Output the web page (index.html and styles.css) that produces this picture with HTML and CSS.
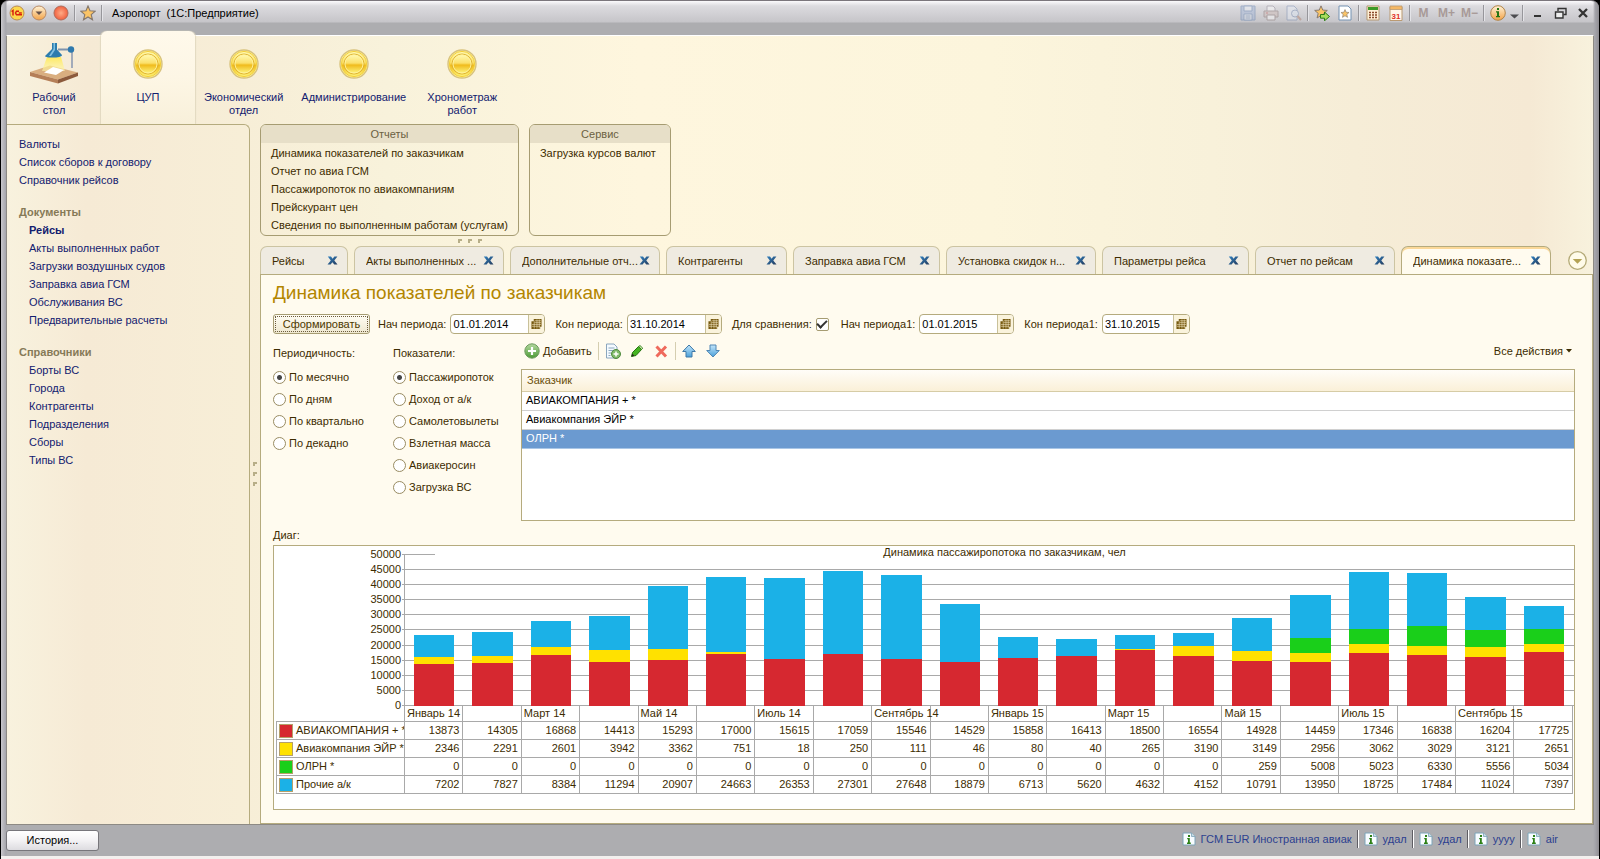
FILE: index.html
```html
<!DOCTYPE html>
<html lang="ru">
<head>
<meta charset="utf-8">
<title>Аэропорт (1С:Предприятие)</title>
<link rel="stylesheet" href="styles.css">
</head>
<body>
<svg class="defs" aria-hidden="true">
  <defs>
    <linearGradient id="gold" x1="0" y1="0" x2="0" y2="1"><stop offset="0" stop-color="#fff9b0"/><stop offset=".45" stop-color="#fbe06a"/><stop offset=".56" stop-color="#f0bb1c"/><stop offset="1" stop-color="#fdf37a"/></linearGradient>
    <linearGradient id="orange" x1="0" y1="0" x2="0" y2="1"><stop offset="0" stop-color="#fff3d8"/><stop offset="1" stop-color="#f3a348"/></linearGradient>
    <radialGradient id="red"><stop offset="0" stop-color="#ffab86"/><stop offset="1" stop-color="#f0603f"/></radialGradient>
    <linearGradient id="blue" x1="0" y1="0" x2="0" y2="1"><stop offset="0" stop-color="#c4e6fa"/><stop offset="1" stop-color="#4aa0da"/></linearGradient>
    <linearGradient id="green" x1="0" y1="0" x2="0" y2="1"><stop offset="0" stop-color="#b4d9a0"/><stop offset="1" stop-color="#4c9a35"/></linearGradient>
    <linearGradient id="beam" x1="0" y1="0" x2="0" y2="1"><stop offset="0" stop-color="#ffe94a"/><stop offset="1" stop-color="#fff6ae" stop-opacity=".7"/></linearGradient>
    <linearGradient id="cross" x1="0" y1="0" x2="1" y2="1"><stop offset="0" stop-color="#2f80c0"/><stop offset="1" stop-color="#263c5c"/></linearGradient>
  </defs>
  <symbol id="coin" viewBox="0 0 30 30"><circle cx="15" cy="15" r="14" fill="#fff5a0" stroke="#d8c27c" stroke-width="1.400"/><circle cx="15" cy="15" r="12.600" fill="url(#gold)" stroke="#f3cf3c"/><circle cx="15" cy="15" r="10" fill="none" stroke="#dcb02e" stroke-width=".9"/><circle cx="15" cy="15" r="9" fill="url(#gold)" stroke="#fff3a0" stroke-width=".9"/></symbol>
  <symbol id="x" viewBox="0 0 11 11"><path d="M.8 1.500H4L5.600 3.700 7.400 1.500h3L7.300 5.500l3.200 4H7.300L5.400 7.300 3.600 9.500H.5L3.800 5.500Z" fill="url(#cross)"/></symbol>
  <symbol id="cal" viewBox="0 0 12 12"><path d="M3 .5h8.500v8.500H10v2.500H.5V3H3Z" fill="#76590f"/><path d="M4 2.500h7M4 4.500h7M1 6.500h10M1 8.500h9M6.500 1v10M9 1v10M3.500 3v8" stroke="#fbf1cf" stroke-width=".6"/></symbol>
  <symbol id="info" viewBox="0 0 14 14"><path d="M1 1h8.500L13 4.500V13H1Z" fill="#f7fcff" stroke="#7da4b8"/><path d="M9.500 1v3.500H13" fill="#c6dbe6" stroke="#7da4b8" stroke-width=".8"/><path d="M5.200 6h2.600v4.500h1V12H5v-1.500h1V7.300h-.8ZM6 3h2v2H6Z" fill="#2c8015"/></symbol>
  <symbol id="star" viewBox="0 0 16 16"><path d="m8 1 2 4.800 5.200.4-4 3.400 1.300 5.200L8 12l-4.500 2.800 1.300-5.200-4-3.400L6 5.800Z" fill="#fbc466" stroke="#84776c" stroke-width="1.100"/></symbol>
</svg>

<div class="window">
  <header class="titlebar">
    <button class="ico" aria-label="Главное меню"><svg viewBox="0 0 16 16"><circle cx="8" cy="8" r="7" fill="#fcd84c" stroke="#b98a55"/><path d="M2.500 6.500 4 5.500v5M10 6.200H7.500L6.500 8l1 1.800H13M9.800 8h3" fill="none" stroke="#d8200f" stroke-width="1.500"/></svg></button>
    <button class="ico" aria-label="Меню"><svg viewBox="0 0 16 16"><circle cx="8" cy="8" r="7" fill="url(#orange)" stroke="#b98a66"/><path d="M4.500 6.500h7L8 10Z" fill="#665149"/></svg></button>
    <button class="ico" aria-label="Закрыть окно"><svg viewBox="0 0 16 16"><circle cx="8" cy="8" r="7" fill="url(#red)" stroke="#b06d5c"/></svg></button>
    <span class="vsep"></span>
    <button class="ico" aria-label="Избранное"><svg><use href="#star"/></svg></button>
    <span class="vsep"></span>
    <h1 class="titlebar__title">Аэропорт&nbsp; (1С:Предприятие)</h1>
    <div class="tools">
      <button class="ico ico--off" aria-label="Сохранить"><svg viewBox="0 0 16 16"><path d="M1 1h14v14H1Z" fill="#9fb3d6" stroke="#5f7fae"/><path d="M4 1h8v5H4ZM4 9h8v6H4Z" fill="#eef2f8" stroke="#5f7fae"/><path d="M5.500 11h5M5.500 13h5" stroke="#5f7fae"/></svg></button>
      <button class="ico ico--off" aria-label="Печать"><svg viewBox="0 0 16 16"><path d="M4 6V1h6l2 2v3" fill="#fff" stroke="#8a8290"/><path d="M1 6h14v6H1Z" fill="#cdb9b4" stroke="#84706e"/><path d="M4 10h8v5H4Z" fill="#fff" stroke="#84706e"/><path d="M3 8h2" stroke="#b44"/></svg></button>
      <button class="ico ico--off" aria-label="Просмотр"><svg viewBox="0 0 16 16"><path d="M1 1h7l3 3v11H1Z" fill="#e8edf6" stroke="#7288b0"/><circle cx="9" cy="8.500" r="3.500" fill="#dfe9f6" stroke="#7288b0"/><path d="m11.500 11 3.500 4" stroke="#b07c66" stroke-width="2"/></svg></button>
      <span class="vsep"></span>
      <button class="ico" aria-label="Добавить в избранное"><svg viewBox="0 0 16 16"><use href="#star" x="0" y="0" width="14" height="14"/><path d="M6.500 9.500h4V7l5 4.500-5 4.300v-2.600h-4Z" fill="#a8dd5c" stroke="#2c7d18"/></svg></button>
      <button class="ico" aria-label="Список избранного"><svg viewBox="0 0 16 16"><path d="M2 1h9l3 3v11H2Z" fill="#fff" stroke="#7593b3"/><use href="#star" x="3.500" y="4" width="9" height="9"/></svg></button>
      <span class="vsep"></span>
      <button class="ico" aria-label="Калькулятор"><svg viewBox="0 0 16 16"><path d="M2 1h12v14H2Z" fill="#fff0d6" stroke="#b39772"/><path d="M3 2h10v3H3Z" fill="#3c9a26"/><path d="M4 7.500h2m1 0h2m1 0h2M4 10h2m1 0h2m1 0h2M4 12.500h2m1 0h2m1 0h2" stroke="#8a4a2c" stroke-width="1.500"/></svg></button>
      <button class="ico" aria-label="Календарь"><svg viewBox="0 0 16 16"><path d="M2 2h12v13.500H2Z" fill="#fff7ea" stroke="#ba9a72"/><path d="M2 1h12v3.500H2Z" fill="#f5b866" stroke="#ba9a72" stroke-width=".8"/><text x="8" y="13.500" text-anchor="middle" class="cal-day">31</text></svg></button>
      <span class="vsep"></span>
      <button class="mem">M</button><button class="mem">M+</button><button class="mem">M−</button>
      <span class="vsep"></span>
      <button class="ico" aria-label="Справка"><svg viewBox="0 0 16 16"><circle cx="8" cy="8" r="7.300" fill="url(#orange)" stroke="#b1854a"/><path d="M7 3h2v2H7ZM6 6.300h3V11h1v1.300H6V11h1V7.500H6Z" fill="#237613"/></svg></button>
      <button class="ico ico--narrow" aria-label="Ещё"><svg viewBox="0 0 9 16"><path d="M0 9.500h9L4.500 13.500Z" fill="#4c4c50"/></svg></button>
      <span class="vsep"></span>
      <button class="ico ico--win" aria-label="Свернуть"><svg viewBox="0 0 16 16"><path d="M5 11h7" stroke="#333" stroke-width="2"/></svg></button>
      <button class="ico ico--win" aria-label="Восстановить"><svg viewBox="0 0 16 16"><path d="M6 6V3.500h8v6h-2.500" fill="none" stroke="#333" stroke-width="1.400"/><path d="M3.500 7h7.500v6H3.500Z" fill="#eee" stroke="#333" stroke-width="1.400"/></svg></button>
      <button class="ico ico--win" aria-label="Закрыть"><svg viewBox="0 0 16 16"><path d="m4 4 8 8M12 4l-8 8" stroke="#333" stroke-width="2.300"/></svg></button>
    </div>
  </header>

  <div class="client">
    <nav class="sections" aria-label="Разделы">
      <a class="section" href="#"><svg class="section__lamp" viewBox="0 0 48 42"><path d="M0 30 20 23.500 48 30.500 28 37.500Z" fill="#d9ae80"/><path d="M0 30v4l28 7.500v-4Z" fill="#b57f58"/><path d="M28 37.500v4L48 34v-3.500Z" fill="#8c5a3c"/><path d="M17 15h14l4 14H12Z" fill="url(#beam)" opacity=".85"/><path d="m14 30.500 9-5.500 11 3-8 5Z" fill="#fff"/><path d="M42 9v17" stroke="#a3abba" stroke-width="2"/><path d="M28 7.500h11" stroke="#7d93ad" stroke-width="2"/><circle cx="41" cy="7.500" r="3.200" fill="#2f79ad"/><path d="M22 1h5v6.500l5 5.500c1 3-16 3.500-17 1l7-7Z" fill="#2b7cae"/><path d="M23.500 1H25v7l-4 6h-2l4.500-7Z" fill="#7fc0e2"/></svg><span>Рабочий<br>стол</span></a>
      <a class="section section--on" href="#"><svg class="section__coin"><use href="#coin"/></svg><span>ЦУП</span></a>
      <a class="section" href="#"><svg class="section__coin"><use href="#coin"/></svg><span>Экономический<br>отдел</span></a>
      <a class="section" href="#"><svg class="section__coin"><use href="#coin"/></svg><span>Администрирование</span></a>
      <a class="section" href="#"><svg class="section__coin"><use href="#coin"/></svg><span>Хронометраж<br>работ</span></a>
    </nav>

    <div class="body">
      <nav class="side" aria-label="Навигация">
        <ul class="side__list side__list--top">
          <li><a href="#">Валюты</a></li><li><a href="#">Список сборов к договору</a></li><li><a href="#">Справочник рейсов</a></li>
        </ul>
        <h2 class="side__head">Документы</h2>
        <ul class="side__list">
          <li><a href="#" class="side__current">Рейсы</a></li><li><a href="#">Акты выполненных работ</a></li><li><a href="#">Загрузки воздушных судов</a></li><li><a href="#">Заправка авиа ГСМ</a></li><li><a href="#">Обслуживания ВС</a></li><li><a href="#">Предварительные расчеты</a></li>
        </ul>
        <h2 class="side__head">Справочники</h2>
        <ul class="side__list">
          <li><a href="#">Борты ВС</a></li><li><a href="#">Города</a></li><li><a href="#">Контрагенты</a></li><li><a href="#">Подразделения</a></li><li><a href="#">Сборы</a></li><li><a href="#">Типы ВС</a></li>
        </ul>
      </nav>
      <div class="grip grip--v"><i></i><i></i><i></i></div>

      <main class="main">
        <div class="groups">
          <section class="group"><h2 class="group__head">Отчеты</h2>
            <ul class="group__list"><li><a href="#">Динамика показателей по заказчикам</a></li><li><a href="#">Отчет по авиа ГСМ</a></li><li><a href="#">Пассажиропоток по авиакомпаниям</a></li><li><a href="#">Прейскурант цен</a></li><li><a href="#">Сведения по выполненным работам (услугам)</a></li></ul>
          </section>
          <section class="group"><h2 class="group__head">Сервис</h2>
            <ul class="group__list"><li><a href="#">Загрузка курсов валют</a></li></ul>
          </section>
        </div>
        <div class="grip grip--h"><i></i><i></i><i></i></div>

        <div class="tabs">
          <div class="tab tab--xs"><button class="tab__label">Рейсы</button><button class="tab__x" aria-label="Закрыть"><svg><use href="#x"/></svg></button></div>
          <div class="tab tab--lg"><button class="tab__label">Акты выполненных ...</button><button class="tab__x" aria-label="Закрыть"><svg><use href="#x"/></svg></button></div>
          <div class="tab tab--lg"><button class="tab__label">Дополнительные отч...</button><button class="tab__x" aria-label="Закрыть"><svg><use href="#x"/></svg></button></div>
          <div class="tab tab--sm"><button class="tab__label">Контрагенты</button><button class="tab__x" aria-label="Закрыть"><svg><use href="#x"/></svg></button></div>
          <div class="tab tab--md"><button class="tab__label">Заправка авиа ГСМ</button><button class="tab__x" aria-label="Закрыть"><svg><use href="#x"/></svg></button></div>
          <div class="tab tab--lg"><button class="tab__label">Установка скидок н...</button><button class="tab__x" aria-label="Закрыть"><svg><use href="#x"/></svg></button></div>
          <div class="tab tab--md"><button class="tab__label">Параметры рейса</button><button class="tab__x" aria-label="Закрыть"><svg><use href="#x"/></svg></button></div>
          <div class="tab tab--ms"><button class="tab__label">Отчет по рейсам</button><button class="tab__x" aria-label="Закрыть"><svg><use href="#x"/></svg></button></div>
          <div class="tab tab--lg tab--on"><button class="tab__label">Динамика показате...</button><button class="tab__x" aria-label="Закрыть"><svg><use href="#x"/></svg></button></div>
          <button class="tabs__more" aria-label="Список вкладок"><svg viewBox="0 0 18 18"><circle cx="9" cy="9" r="8.300" fill="#fffbe9" stroke="#b3a976" stroke-width="1.200"/><path d="M4.500 7.500h9L9 12Z" fill="#b3a255"/></svg></button>
        </div>

        <div class="panel">
          <h2 class="panel__title">Динамика показателей по заказчикам</h2>
          <div class="params">
            <button class="run">Сформировать</button>
            <label for="d1">Нач периода:</label><span class="date"><input id="d1" type="text" value="01.01.2014"><button aria-label="Выбрать дату"><svg><use href="#cal"/></svg></button></span>
            <label for="d2">Кон периода:</label><span class="date"><input id="d2" type="text" value="31.10.2014"><button aria-label="Выбрать дату"><svg><use href="#cal"/></svg></button></span>
            <label for="cmp">Для сравнения:</label><input id="cmp" class="check" type="checkbox" checked>
            <label for="d3">Нач периода1:</label><span class="date"><input id="d3" type="text" value="01.01.2015"><button aria-label="Выбрать дату"><svg><use href="#cal"/></svg></button></span>
            <label for="d4">Кон периода1:</label><span class="date date--short"><input id="d4" type="text" value="31.10.2015"><button aria-label="Выбрать дату"><svg><use href="#cal"/></svg></button></span>
          </div>

          <div class="work">
            <div class="radios radios--period" role="radiogroup" aria-labelledby="gp">
              <div class="radios__head" id="gp">Периодичность:</div>
              <label><input type="radio" name="p" checked>По месячно</label><label><input type="radio" name="p">По дням</label><label><input type="radio" name="p">По квартально</label><label><input type="radio" name="p">По декадно</label>
            </div>
            <div class="radios radios--metric" role="radiogroup" aria-labelledby="gm">
              <div class="radios__head" id="gm">Показатели:</div>
              <label><input type="radio" name="m" checked>Пассажиропоток</label><label><input type="radio" name="m">Доход от а/к</label><label><input type="radio" name="m">Самолетовылеты</label><label><input type="radio" name="m">Взлетная масса</label><label><input type="radio" name="m">Авиакеросин</label><label><input type="radio" name="m">Загрузка ВС</label>
            </div>
            <div class="customers">
              <div class="bar">
                <button class="bar__add"><svg viewBox="0 0 16 16"><circle cx="8" cy="8" r="7.200" fill="url(#green)" stroke="#6d9a5e"/><path d="M8 4v8M4 8h8" stroke="#fff" stroke-width="2.200"/></svg>Добавить</button>
                <span class="bar__sep"></span>
                <button class="ico" aria-label="Скопировать"><svg viewBox="0 0 16 16"><path d="M1.500 1H9l3 3v11H1.500Z" fill="#f4faff" stroke="#8ba6bd"/><path d="M3.500 5h6M3.500 7.500h6M3.500 10h3M3.500 12.500h2" stroke="#8ba6bd"/><circle cx="11" cy="11" r="4.500" fill="#7fb96a" stroke="#4e8a3d"/><path d="M11 8.500v5M8.500 11h5" stroke="#fff" stroke-width="1.500"/></svg></button>
                <button class="ico" aria-label="Изменить"><svg viewBox="0 0 16 16"><path d="M2.500 13.500 3.500 9.500 9.500 3.500 12.500 6.500 7 12.500Z" fill="#45b320" stroke="#247411"/><path d="m9.500 3.500 1.500-1 2.800 2.700-1.300 1.300Z" fill="#c6e6a4" stroke="#247411" stroke-width=".8"/><path d="m2.500 13.500.8-3 2 2.200Z" fill="#2b2b1c"/></svg></button>
                <button class="ico" aria-label="Удалить"><svg viewBox="0 0 16 16"><path d="m3.500 3.500 9.500 10M13 3.500l-9.500 10" stroke="#ef6a5c" stroke-width="3"/></svg></button>
                <span class="bar__sep"></span>
                <button class="ico" aria-label="Вверх"><svg viewBox="0 0 16 16"><path d="M8 2 14.300 8.500H11V14H5V8.500H1.700Z" fill="url(#blue)" stroke="#3f79a8"/></svg></button>
                <button class="ico" aria-label="Вниз"><svg viewBox="0 0 16 16"><path d="M8 14 14.300 7.500H11V2H5v5.500H1.700Z" fill="url(#blue)" stroke="#5087b4"/></svg></button>
                <button class="bar__all">Все действия<svg viewBox="0 0 6 4"><path d="M0 0h6L3 3.500Z" fill="#3d2c00"/></svg></button>
              </div>
              <div class="list">
                <table class="list__table">
                  <thead><tr><th>Заказчик</th></tr></thead>
                  <tbody><tr><td>АВИАКОМПАНИЯ + *</td></tr><tr><td>Авиакомпания ЭЙР *</td></tr><tr class="is-on"><td>ОЛРН *</td></tr></tbody>
                </table>
              </div>
            </div>
          </div>

          <div class="diag">Диаг:</div>
          <div class="chart">
            <div class="plot">
              <ol class="plot__axis" id="axis"></ol>
              <div class="plot__area">
                <div class="plot__grid" id="grid"></div>
                <div class="plot__title">Динамика пассажиропотока по заказчикам, чел</div>
                <div class="plot__bars" id="bars"></div>
              </div>
            </div>
            <table class="data"><thead><tr id="months"><td class="data__corner"></td></tr></thead><tbody id="rows"></tbody></table>
          </div>
        </div>
      </main>
    </div>
  </div>

  <footer class="status">
    <button class="history">История...</button>
    <div class="links">
      <a href="#"><svg><use href="#info"/></svg>ГСМ EUR Иностранная авиак</a>
      <a href="#"><svg><use href="#info"/></svg>удал</a>
      <a href="#"><svg><use href="#info"/></svg>удал</a>
      <a href="#"><svg><use href="#info"/></svg>уууу</a>
      <a href="#"><svg><use href="#info"/></svg>air</a>
    </div>
  </footer>
</div>
<script src="chart.js"></script>
</body>
</html>
```
FILE: styles.css
```css
* { box-sizing: border-box; }
body { margin: 0; background: #000; font-family: "Liberation Sans", Arial, sans-serif; font-size: 11px; line-height: 18px; color: #3d2c00; }
button, input { font: inherit; color: inherit; margin: 0; }
button { border: 0; padding: 0; background: none; }
a { color: inherit; text-decoration: none; }
ul, ol { list-style: none; margin: 0; padding: 0; }
h1, h2 { margin: 0; font-size: inherit; font-weight: normal; }
svg { display: block; flex: none; }
.defs { position: absolute; width: 0; height: 0; }

.window { min-height: 100vh; margin: 0 1px; padding: 0 5px; display: flex; flex-direction: column; border-bottom: 3px solid #f3f0ee; border-top: 1px solid #7b767c; border-radius: 8px 8px 0 0; background: linear-gradient(to right, #c9c8cc, #a5a5ab 5px, transparent 6px, transparent calc(100% - 6px), #a5a5ab calc(100% - 4px), #8f8d92), linear-gradient(#fbfafc, #dcdbdf 5px, #c6c5c9 21px, #adadb0 22px, #adadb0 100%); }

.titlebar { height: 34px; padding: 3px 0 13px; display: flex; align-items: center; }
.ico { width: 23px; height: 18px; display: flex; align-items: center; justify-content: center; flex: none; }
.ico svg { width: 16px; height: 16px; }
.titlebar > .ico { width: 22px; }
.ico--off { opacity: .45; }
.titlebar .ico--narrow { width: 11px; }
.ico--narrow svg { width: 9px; }
.vsep { width: 1px; height: 16px; margin: 0 2px; background: #97969b; box-shadow: 1px 0 #e4e4e8; flex: none; }
.titlebar__title { margin-left: 8px; font-size: 11px; color: #000; white-space: nowrap; }
.tools { margin-left: auto; display: flex; align-items: center; }
.mem { min-width: 23px; font-weight: bold; font-size: 12px; color: #a89a98; }
.cal-day { font: bold 8px "Liberation Sans", Arial, sans-serif; fill: #e0301e; }

.client { flex: 1; display: flex; flex-direction: column; border: 1px solid #8d8a84; border-top: 1px solid #fff; background: linear-gradient(to right, #f8f2de, #f6ead5 5%, #f7eed7 15%, #f8f2db 24%, #fef6de 40%, #fcf5dc 62%, #f8f1da 76%, #f6edd7 85%, #f5e9d4 96%, #f8f2dd); }
.sections { display: flex; color: #12206f; text-align: center; line-height: 13px; min-height: 88px; }
.section { min-width: 94px; padding: 12px 9px 0; display: flex; flex-direction: column; align-items: center; }
.section--on { margin: -5px 0 0; padding-top: 17px; border-radius: 6px 6px 0 0; background: linear-gradient(#fff9eb, #fdf6e5 50%, #f8f0da); box-shadow: 1px 0 1px #e2d9c0, -1px 0 1px #e2d9c0; }
.section__coin { width: 30px; height: 30px; margin: 1px 0 12px; }
.section__lamp { width: 48px; height: 42px; margin: -6px 0 7px; }

.body { flex: 1; display: flex; }
.side { width: 243px; flex: none; padding: 10px 12px; border: 1px solid #b5ab7e; border-width: 1px 1px 0 0; border-radius: 0 6px 0 0; color: #12206f; }
.side__list { padding-left: 10px; }
.side__list--top { padding-left: 0; }
.side__current { font-weight: bold; }
.side__head { margin-top: 14px; font-weight: bold; color: #867a57; }
.grip { display: flex; }
.grip i { width: 4px; height: 4px; border: solid #b7ae88; border-width: 2px 0 0 2px; }
.grip--v { width: 10px; flex-direction: column; align-items: center; justify-content: center; gap: 6px; }
.grip--h { height: 10px; gap: 6px; justify-content: flex-start; align-items: center; padding-left: 198px; }

.main { flex: 1; min-width: 0; display: flex; flex-direction: column; }
.groups { display: flex; gap: 10px; }
.group { min-width: 142px; border: 1px solid #a69c72; border-radius: 6px; overflow: hidden; }
.group__head { text-align: center; background: #e7dfc8; color: #6b6142; }
.group__list { padding: 1px 10px; }

.tabs { display: flex; gap: 6px; padding-right: 6px; height: 29px; margin-bottom: -1px; align-items: stretch; }
.tab { display: flex; justify-content: space-between; align-items: center; padding: 0 9px 0 11px; border: 1px solid #ccc4a2; border-bottom-color: #b5ab7e; border-radius: 7px 7px 0 0; background: #efebe1; flex: 0 1 auto; min-width: 0; }
.tab--xs { width: 88px; } .tab--sm { width: 121px; } .tab--ms { width: 140px; } .tab--md { width: 147px; } .tab--lg { width: 150px; }
.tab--on { background: #fffbef; border-color: #b5ab7e; border-bottom-color: #fffbef; box-shadow: inset 0 2px #fbd898; }
.tab__label { white-space: nowrap; overflow: hidden; }
.tab__x svg { width: 11px; height: 11px; }
.tabs__more { margin-left: auto; }
.tabs__more svg { width: 19px; height: 19px; }

.panel { flex: 1; padding: 6px 17px 13px 12px; border: 1px solid #b5ab7e; background: #fffbef; }
.panel__title { font-size: 19px; line-height: 24px; color: #b38600; }
.params { display: flex; align-items: center; gap: 4px; margin-top: 9px; height: 20px; white-space: nowrap; }
.run { width: 97px; height: 20px; margin-right: 4px; border: 1px solid #a69c72; border-radius: 3px; outline: 1px dotted #6b5a3c; outline-offset: -3px; background: linear-gradient(#fffdf4, #efe8d0); color: #4c3800; }
.date { width: 95px; height: 20px; display: flex; border: 1px solid #b5ab7e; border-radius: 4px; background: #fff; overflow: hidden; margin-right: 6px; }
.date--short { width: 88px; }
.date input { flex: 1; min-width: 0; border: 0; padding: 0 0 0 2px; background: none; color: #000; outline: 0; }
.date button { width: 16px; display: flex; align-items: center; justify-content: center; border-left: 1px solid #c9c19a; background: #faf3dc; }
.date svg { width: 11px; height: 12px; }
.check { appearance: none; width: 13px; height: 13px; margin-right: 8px; border: 1px solid #a69c72; border-radius: 2px; background: #fff; display: grid; place-items: center; }
.check:checked::before { content: ""; width: 8px; height: 4px; border: solid #333; border-width: 0 0 2px 2px; transform: translateY(-1px) rotate(-45deg); }

.work { display: flex; margin-top: 8px; }
.radios { display: flex; flex-direction: column; flex: none; }
.radios--period { width: 120px; }
.radios--metric { width: 128px; }
.radios__head { line-height: 22px; margin-bottom: 2px; }
.radios label { height: 22px; display: flex; align-items: center; gap: 3px; }
.radios input { appearance: none; width: 13px; height: 13px; border: 1px solid #998c62; border-radius: 50%; background: #fff; }
.radios input:checked { background: radial-gradient(circle, #444 2px, #fff 3px); }
.customers { flex: 1; min-width: 0; }
.bar { display: flex; align-items: center; gap: 1px; height: 18px; }
.bar__add { display: flex; align-items: center; gap: 3px; padding-left: 3px; }
.bar__add svg { width: 16px; height: 16px; }
.bar__sep { width: 1px; height: 18px; margin: 0 2px 0 5px; background: #d5ceb0; }
.bar__sep ~ .bar__sep { margin: 0 1px; }
.bar__all { margin-left: auto; display: flex; align-items: center; gap: 3px; padding-right: 3px; }
.bar__all svg { width: 6px; height: 4px; }
.list { margin-top: 9px; height: 152px; border: 1px solid #b5ab7e; background: #fff; }
.list__table { width: 100%; border-collapse: collapse; color: #000; }
.list__table th { height: 21px; padding: 0 5px; text-align: left; font-weight: normal; color: #6b4f0a; background: linear-gradient(#fffdf8, #faf0d8); border-bottom: 1px solid #d6cca6; }
.list__table td { height: 19px; padding: 0 4px; line-height: 17px; border-bottom: 1px solid #d0d0d0; }
.list__table .is-on td { background: #6b9ad0; color: #fff; border-color: #a9c6e6; }

.diag { margin-top: 5px; margin-bottom: 1px; }
.chart { border: 1px solid #b5ab7e; background: #fff; padding: 8px 0 15px 2px; white-space: nowrap; }
.plot { display: flex; height: 152px; position: relative; z-index: 1; }
.plot__axis { width: 128px; padding-right: 3px; flex: none; display: flex; flex-direction: column; justify-content: space-between; text-align: right; }
.plot__axis li { height: 1px; line-height: 1px; }
.plot__area { position: relative; flex: 1; border-left: 1px solid #a9a9a9; }
.plot__grid { position: absolute; inset: 0 0 0 -3px; display: flex; flex-direction: column; justify-content: space-between; }
.plot__grid i { height: 1px; background: #a9a9a9; }
.plot__title { position: absolute; left: 30px; right: 0; top: -8px; line-height: 12px; padding-bottom: 2px; background: #fff; text-align: center; }
.plot__bars { position: absolute; inset: 0 1px 0 0; display: flex; }
.stack { flex: 1; padding: 0 9px; display: flex; flex-direction: column-reverse; }
.seg { flex: none; }
.c0 { background: #d62830; } .c1 { background: #ffe100; } .c2 { background: #1acf1a; } .c3 { background: #1bb1e7; }
.data { width: calc(100% - 1px); table-layout: fixed; border-collapse: collapse; margin-top: -1px; }
.data th, .data td { height: 18px; padding: 0 3px; line-height: 15px; border: 1px solid #a9a9a9; font-weight: normal; text-align: right; }
.data thead th { height: 16px; padding: 0 2px; text-align: left; }
.data .data__corner { width: 128px; height: 16px; border-top: 0; border-left: 0; }
.data tbody th { overflow: hidden; padding: 0 0 0 2px; text-align: left; }
.key { display: inline-block; vertical-align: middle; width: 14px; height: 14px; margin-right: 3px; border: 1px solid #b5a06a; }

.status { height: 31px; display: flex; align-items: center; justify-content: space-between; padding: 0 36px 4px 0; }
.history { width: 93px; height: 21px; margin-top: 3px; border: 1px solid #77767b; border-radius: 3px; background: linear-gradient(#fff, #f3f2f4 50%, #dddce0); color: #000; }
.links { display: flex; color: #2c3f8f; }
.links a { display: flex; align-items: center; gap: 5px; padding: 0 5px 0 6px; border-left: 1px solid #5e5d63; box-shadow: inset 1px 0 #fff; }
.links a:first-child { border: 0; box-shadow: none; }
.links a:last-child { padding-right: 0; }
.links svg { width: 14px; height: 14px; }
```
FILE: chart.js
```js
const MAX = 50000;
const MIN_VISIBLE = 260;
const months = ["Январь 14", "", "Март 14", "", "Май 14", "", "Июль 14", "", "Сентябрь 14", "", "Январь 15", "", "Март 15", "", "Май 15", "", "Июль 15", "", "Сентябрь 15", ""];
const series = [
  ["АВИАКОМПАНИЯ + *", [13873, 14305, 16868, 14413, 15293, 17000, 15615, 17059, 15546, 14529, 15858, 16413, 18500, 16554, 14928, 14459, 17346, 16838, 16204, 17725]],
  ["Авиакомпания ЭЙР *", [2346, 2291, 2601, 3942, 3362, 751, 18, 250, 111, 46, 80, 40, 265, 3190, 3149, 2956, 3062, 3029, 3121, 2651]],
  ["ОЛРН *", [0, 0, 0, 0, 0, 0, 0, 0, 0, 0, 0, 0, 0, 0, 259, 5008, 5023, 6330, 5556, 5034]],
  ["Прочие а/к", [7202, 7827, 8384, 11294, 20907, 24663, 26353, 27301, 27648, 18879, 6713, 5620, 4632, 4152, 10791, 13950, 18725, 17484, 11024, 7397]]
];

function add(parent, tag, cls, text) {
  const el = document.createElement(tag);
  if (cls) el.className = cls;
  if (text !== undefined) el.textContent = text;
  parent.appendChild(el);
  return el;
}

const byId = id => document.getElementById(id);

for (let v = MAX; v >= 0; v -= 5000) {
  add(byId("axis"), "li", "", v);
  add(byId("grid"), "i");
}

months.forEach((name, i) => {
  add(byId("months"), "th", "", name);
  const stack = add(byId("bars"), "div", "stack");
  series.forEach(([, values], s) => {
    if (values[i] < MIN_VISIBLE) return;
    add(stack, "div", "seg c" + s).style.height = values[i] / MAX * 100 + "%";
  });
});

series.forEach(([name, values], s) => {
  const row = add(byId("rows"), "tr");
  const head = add(row, "th");
  add(head, "span", "key c" + s);
  head.append(name);
  values.forEach(v => add(row, "td", "", v));
});
```
